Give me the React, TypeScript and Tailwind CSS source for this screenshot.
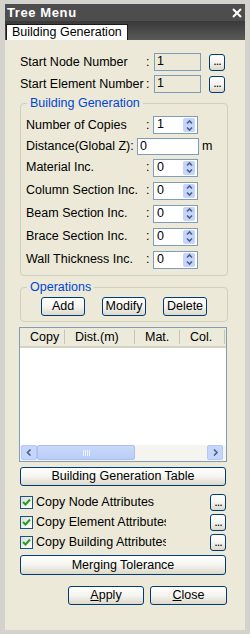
import type { ReactNode } from 'react';

const btn =
  'border border-[#003c74] rounded-[3px] bg-linear-to-b from-white via-[#f5f4ef] to-[#dcd8cb] text-[12.5px] leading-none text-black flex items-center justify-center';

function Dots() {
  return <div className={`${btn} w-[16px] h-[17px] shrink-0 items-end pb-[2px] tracking-[-1px]`}>...</div>;
}

function Chevron({ dir }: { dir: 'up' | 'down' | 'left' | 'right' }) {
  const d = {
    up: 'M1 4.5 L3.5 2 L6 4.5',
    down: 'M1 1.5 L3.5 4 L6 1.5',
    left: 'M4.5 0.5 L1.5 3.5 L4.5 6.5',
    right: 'M2 0.5 L5 3.5 L2 6.5',
  }[dir];
  const horiz = dir === 'left' || dir === 'right';
  return (
    <svg width={7} height={horiz ? 7 : 6} viewBox={horiz ? '0 0 7 7' : '0 0 7 6'}>
      <path d={d} stroke="#4d6185" strokeWidth="1.6" fill="none" />
    </svg>
  );
}

function Spin({ value }: { value: string }) {
  return (
    <div className="w-[45px] h-[18px] border border-[#7f9db9] bg-white flex shrink-0">
      <span className="flex-1 pl-[3px] leading-[15px]">{value}</span>
      <div className="w-[12px] my-[1px] mr-[2px] rounded-[2px] bg-[#c4d4fb] flex flex-col items-center justify-center gap-[1px]">
        <Chevron dir="up" />
        <Chevron dir="down" />
      </div>
    </div>
  );
}

function Group({ title, children, className = '' }: { title: string; children: ReactNode; className?: string }) {
  return (
    <fieldset className={`mx-[15px] w-[208px] border border-[#d0d0bf] rounded-[4px] ${className}`}>
      <legend className="ml-[6px] px-[3px] text-[#0046d5] leading-[14px]">{title}</legend>
      {children}
    </fieldset>
  );
}

function SpinRow({ label, value, h }: { label: string; value: string; h: string }) {
  return (
    <div className={`flex items-center pl-[5px] ${h}`}>
      <span className="w-[120px] whitespace-nowrap">{label}</span>
      <span className="w-[7px]">:</span>
      <Spin value={value} />
    </div>
  );
}

function Check({ label }: { label: string }) {
  return (
    <div className="flex items-center h-[17px] pl-[15px] pr-[19px]">
      <div className="w-[13px] h-[13px] border border-[#1c5180] bg-linear-to-br from-[#dcdcd7] to-white flex items-center justify-center shrink-0">
        <svg width="9" height="9" viewBox="0 0 9 9">
          <path d="M1 4 L3.5 6.5 L8 1.5" stroke="#21a121" strokeWidth="2" fill="none" />
        </svg>
      </div>
      <span className="ml-[3px] w-[130px] overflow-hidden whitespace-nowrap">{label}</span>
      <div className="flex-1" />
      <Dots />
    </div>
  );
}

export default function App() {
  return (
    <div className="w-[250px] h-[634px] bg-[#d4d2cc] pt-[4px] px-[5px] pb-[4px] flex flex-col font-['Liberation_Sans',Arial,sans-serif] text-[12.5px] text-black">
      <div className="h-[17px] bg-[#4d4d4d] flex items-center justify-between pl-[2px] pr-[3px]">
        <span className="text-white font-bold text-[13px] tracking-[0.6px] leading-none">Tree Menu</span>
        <svg width="10" height="10" viewBox="0 0 10 10">
          <path d="M1 1 L9 9 M9 1 L1 9" stroke="white" strokeWidth="2" />
        </svg>
      </div>
      <div className="h-[19px] bg-linear-to-b from-[#393939] to-[#5a5a5a] flex items-end pl-[1px]">
        <div className="h-[16px] w-[122px] bg-white border border-b-0 border-[#1a1a1a] pl-[5px] leading-[15px]">
          Building Generation
        </div>
      </div>

      <div className="flex-1 bg-[#ece9d8] flex flex-col">
        <div className="mt-[13px] flex items-center pl-[15px] h-[18px]">
          <span className="w-[126px] whitespace-nowrap">Start Node Number</span>
          <span className="w-[8px]">:</span>
          <div className="w-[47px] h-[18px] border border-[#7f9db9] bg-[#ece9d8] pl-[2px] leading-[15px]">1</div>
          <div className="ml-[8px]"><Dots /></div>
        </div>
        <div className="mt-[4px] flex items-center pl-[15px] h-[18px]">
          <span className="w-[126px] whitespace-nowrap">Start Element Number</span>
          <span className="w-[8px]">:</span>
          <div className="w-[47px] h-[18px] border border-[#7f9db9] bg-[#ece9d8] pl-[2px] leading-[15px]">1</div>
          <div className="ml-[8px]"><Dots /></div>
        </div>

        <Group title="Building Generation" className="mt-[3px] pt-[4px] pb-[4px]">
          <SpinRow label="Number of Copies" value="1" h="h-[22px]" />
          <div className="flex items-center pl-[5px] h-[20px]">
            <span className="w-[111px] whitespace-nowrap">Distance(Global Z):</span>
            <div className="w-[62px] h-[17px] border border-[#7f9db9] bg-white pl-[2px] leading-[14px]">0</div>
            <span className="ml-[3px]">m</span>
          </div>
          <SpinRow label="Material Inc." value="0" h="h-[23px]" />
          <SpinRow label="Column Section Inc." value="0" h="h-[23px]" />
          <SpinRow label="Beam Section Inc." value="0" h="h-[23px]" />
          <SpinRow label="Brace Section Inc." value="0" h="h-[23px]" />
          <SpinRow label="Wall Thickness Inc." value="0" h="h-[23px]" />
        </Group>

        <Group title="Operations" className="mt-[4px] pt-[3px] pb-[5px]">
          <div className="flex justify-center gap-[17px]">
            <div className={`${btn} w-[44px] h-[19px]`}>Add</div>
            <div className={`${btn} w-[44px] h-[19px]`}>Modify</div>
            <div className={`${btn} w-[44px] h-[19px]`}>Delete</div>
          </div>
        </Group>

        <div className="mt-[5px] ml-[14px] w-[208px] h-[135px] border border-[#7f9db9] bg-white flex flex-col">
          <div className="h-[20px] bg-[#ebeadb] border-b-2 border-[#d6d2c2] flex items-center">
            <div className="w-[45px] pl-[10px] border-r border-[#c7c5b2] h-[14px] leading-[14px]">Copy</div>
            <div className="w-[70px] pl-[10px] border-r border-[#c7c5b2] h-[14px] leading-[14px]">Dist.(m)</div>
            <div className="w-[45px] pl-[10px] border-r border-[#c7c5b2] h-[14px] leading-[14px]">Mat.</div>
            <div className="w-[45px] pl-[10px] border-r border-[#c7c5b2] h-[14px] leading-[14px]">Col.</div>
          </div>
          <div className="flex-1" />
          <div className="h-[16px] bg-[#f5f4ee] flex items-stretch px-[1px] pb-[1px]">
            <div className="w-[16px] rounded-[2px] bg-[#c5d5fb] border border-[#b4c8f3] flex items-center justify-center">
              <Chevron dir="left" />
            </div>
            <div className="w-[98px] rounded-[2px] bg-linear-to-b from-[#cad9fc] to-[#b9cdf8] border border-[#a9bff0] flex items-center justify-center gap-[1px]">
              {[0, 1, 2, 3].map((i) => (
                <div key={i} className="w-[1px] h-[6px] bg-[#eef3fe]" />
              ))}
            </div>
            <div className="flex-1" />
            <div className="w-[16px] mr-[2px] rounded-[2px] bg-[#c5d5fb] border border-[#b4c8f3] flex items-center justify-center">
              <Chevron dir="right" />
            </div>
          </div>
        </div>

        <div className={`${btn} mt-[5px] ml-[15px] w-[206px] h-[19px]`}>Building Generation Table</div>

        <div className="mt-[8px] flex flex-col gap-[3px]">
          <Check label="Copy Node Attributes" />
          <Check label="Copy Element Attributes" />
          <Check label="Copy Building Attributes" />
        </div>

        <div className={`${btn} mt-[4px] ml-[15px] w-[206px] h-[20px]`}>Merging Tolerance</div>

        <div className="mt-[11px] flex justify-end gap-[6px] pr-[18px]">
          <div className={`${btn} w-[76px] h-[19px]`}>
            <span><span className="underline">A</span>pply</span>
          </div>
          <div className={`${btn} w-[77px] h-[19px]`}>
            <span><span className="underline">C</span>lose</span>
          </div>
        </div>
      </div>
    </div>
  );
}
